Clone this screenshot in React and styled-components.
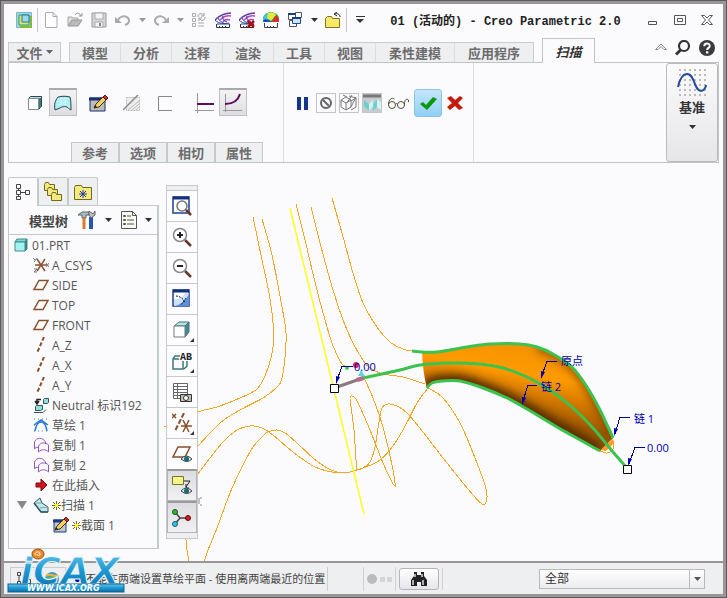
import React from 'react'
import styled, { createGlobalStyle } from 'styled-components'

// builds a smooth curve through a list of points
function curve(points) {
  let d = `M${points[0][0]} ${points[0][1]}`
  for (let i = 0; i < points.length - 1; i++) {
    const p0 = points[i - 1] || points[i]
    const p1 = points[i]
    const p2 = points[i + 1]
    const p3 = points[i + 2] || p2
    d += ` C${p1[0] + (p2[0] - p0[0]) / 6} ${p1[1] + (p2[1] - p0[1]) / 6} ${p2[0] - (p3[0] - p1[0]) / 6} ${p2[1] - (p3[1] - p1[1]) / 6} ${p2[0]} ${p2[1]}`
  }
  return d
}

const wires = [
  [[253, 217], [262, 260], [269, 293], [273, 323], [273, 347], [268, 368], [258, 388], [240, 398], [217, 407], [198, 412], [164, 427]],
  [[262, 219], [272, 255], [282, 307], [286, 333], [285, 357], [282, 378], [277, 387], [263, 398], [240, 410], [220, 423], [198, 446]],
  [[198, 474], [210, 458], [223, 442], [237, 430], [250, 426], [262, 428], [273, 435], [293, 452], [313, 466], [327, 471], [343, 473], [357, 470], [377, 462], [390, 450], [403, 430], [417, 403], [428, 388]],
  [[428, 388], [443, 398], [460, 423], [473, 453], [485, 485], [487, 497], [485, 504], [482, 504], [473, 495], [443, 458], [423, 432], [407, 413], [397, 406], [388, 404], [382, 408], [379, 422], [375, 447], [370, 462], [363, 468], [357, 470]],
  [[204, 562], [208, 550], [217, 528], [230, 493], [242, 467], [253, 447], [263, 436], [268, 432], [277, 430], [285, 433], [297, 443], [313, 458], [327, 468], [337, 472], [343, 473]],
  [[357, 470], [356, 460], [354, 430], [351, 407], [350, 398], [352, 396], [357, 401], [370, 430], [383, 463], [392, 482], [395, 486], [395, 483], [392, 465], [383, 427], [373, 398], [364, 378]],
  [[296, 204], [305, 240], [317, 290], [330, 337], [338, 357], [343, 365], [350, 367]],
  [[311, 207], [320, 243], [333, 290], [343, 320], [353, 343], [363, 360], [370, 368], [383, 374], [403, 377], [425, 384]],
  [[332, 198], [342, 233], [353, 273], [363, 303], [377, 327], [390, 342], [403, 349], [412, 351]],
  [[184, 530], [186, 540], [187, 550], [189, 562]],
  [[600, 451], [607, 453], [613, 449], [614, 441]],
]
const topEdge = [[422, 352], [437, 352], [467, 347], [490, 344], [520, 344], [537, 347], [553, 354], [572, 367], [587, 387], [600, 410], [613, 438]]
const bottomEdge = [[427, 388], [432, 383], [443, 381], [460, 381], [483, 388], [507, 398], [527, 409], [557, 427], [600, 451]]
const spine = [[363, 378], [400, 370], [420, 365], [450, 363], [480, 364], [503, 368], [527, 377], [550, 390], [573, 408], [593, 428], [613, 452], [627, 468]]
const surface =
  curve(topEdge) + ' L600 451 ' + curve([...bottomEdge].reverse()).replace('M', 'L') + ' Q423 374 422 352 Z'

const labels = [
  { text: '原点', x: 561, y: 365, line: '557,361 547,361 541,378', tip: [541, 379] },
  { text: '链 2', x: 541, y: 391, line: '537,385 528,385 522,404', tip: [522, 405] },
  { text: '链 1', x: 634, y: 423, line: '630,417 620,417 615,434', tip: [614, 436] },
  { text: '0.00', x: 647, y: 452, line: '645,447 635,447 629,464', tip: [628, 466] },
  { text: '0.00', x: 354, y: 371, line: '353,366 342,366 336,383', tip: [336, 384] },
]

const Icon = ({ w = 16, h = 16, children }) => (
  <Svg width={w} height={h} viewBox={`0 0 ${w} ${h}`} fill="none" aria-hidden="true">
    {children}
  </Svg>
)
const Caret = ({ color = '#333' }) => (
  <Icon w={7} h={4}><path d="M0 0h7L3.500 4z" fill={color} /></Icon>
)
const Undo = ({ flip }) => (
  <Icon>
    <g transform={flip ? 'translate(16 0) scale(-1 1)' : undefined}>
      <path d="M3 8c2-4 7-5 10-2 2.500 3 .5 6-3 7" stroke="#aaa" strokeWidth="2" />
      <path d="M0 5v6h7z" fill="#aaa" />
    </g>
  </Icon>
)
const Parallels = () => (
  <g>
    <path d="M16 1C10 1 5 3 0 8" stroke="#5a3a9c" strokeWidth="1.500" />
    <path d="M16 4C11 3 8 5 5 8M15 8c-4-1-6 0-7 2" stroke="#c03fc4" strokeWidth="1.500" />
    <path d="M0 8c4 4 9 4 14 3M3 6c1 3 4 4 7 6M8 4c-1 3 1 5 4 6" stroke="#26479f" />
    <path d="M2 12l13 0" stroke="#26479f" />
    <path d="M1.500 12v3.500h13V12M4.500 14v2M7.500 14v2M10.500 14v2" stroke="#333" />
  </g>
)
const Pencil = ({ x = 0, y = 0 }) => (
  <g transform={`translate(${x} ${y})`}>
    <path d="M1 13l2-4 8-8 3 3-8 8z" fill="#f5cf6b" stroke="#40300a" />
    <path d="M10 2l2-2 3 3-2 2z" fill="#c33329" stroke="#6d120d" />
    <path d="M1 13l1-3 2 2z" fill="#222" />
  </g>
)
const Eye = () => (
  <g>
    <path d="M9 15q5-6 11 0q-5 5-11 0z" fill="#d5e5e8" stroke="#444" />
    <circle cx="14.500" cy="15" r="2.500" fill="#176b77" />
  </g>
)
const Glass = ({ sign }) => (
  <g>
    <path d="M13 13l6 6" stroke="#6b342b" strokeWidth="2.500" />
    <circle cx="8" cy="8" r="6.500" fill="#fff" stroke="#888" strokeWidth="1.500" />
    {sign && <path d={sign} stroke="#222" strokeWidth="2" />}
  </g>
)
const Window = ({ size = 18 }) => (
  <g>
    <path d={`M1 1h${size - 2}v${size - 2}h-${size - 2}z`} fill="#fff" stroke="#1f3f92" strokeWidth="1.500" />
    <path d={`M1 2h${size - 2}`} stroke="#12307f" strokeWidth="3" />
  </g>
)
const Folder = ({ x = 0, y = 0 }) => (
  <path transform={`translate(${x} ${y})`} d="M.5 8.500v-6l1-2h3l1 2h5v6z" fill="#f3e87c" stroke="#73691e" />
)

const quickTools = [
  { name: '新建', icon: <Icon><path d="M3 .5h7l4 4v11H2.500V.5z M10 .5v4h4" stroke="#aaa" fill="#fff" /></Icon> },
  { name: '打开', icon: <Icon><path d="M1 14V5h4l1 1h5v2" fill="#ddd" stroke="#aaa" /><path d="M1 14l4-6h10l-4 6z" fill="#bbb" stroke="#999" /><path d="M8 3c2-3 5-2 6 1m1-3v3h-3" stroke="#999" /></Icon> },
  { name: '保存', icon: <Icon><path d="M1 1h14v14H1z" fill="#d5d5d8" stroke="#999" /><path d="M4 1h8v6H4zM4 10h8v5H4z" fill="#f5f5f6" stroke="#aaa" /><path d="M9 11v3" stroke="#888" strokeWidth="2" /></Icon> },
  { name: '撤销', icon: <Undo />, caret: '#999' },
  { name: '重做', icon: <Undo flip />, caret: '#999' },
  { name: '重新生成', icon: <Icon><path d="M1.500 1.500h3v3h-3zM1.500 6.500h3v3h-3zM1.500 11.500h3v3h-3zM7 11h6M7 14h6" stroke="#aaa" /><path d="M7 5c0-4 4-4 5-2m1-2v3h-3M14 5c0 4-4 4-5 2M8 9V6h3" stroke="#999" /></Icon> },
  { name: '曲率', icon: <Icon><Parallels /></Icon> },
  { name: '删除曲率', icon: <Icon><Parallels /><path d="M9 9l6 6m0-6l-6 6" stroke="#a80f17" strokeWidth="2.500" /></Icon> },
  { name: '着色分析', icon: <Icon><path d="M0 10V7c0-9 16-9 16 0v3z" fill="#2aa24a" /><path d="M0 8c0-4 3-7 6-7v6z" fill="#33c9e4" /><path d="M5 1c3-1 7-1 8 2l-5 6-4-3z" fill="#e6e83c" /><path d="M9 10l3-6c4 0 4 3 4 6z" fill="#da2f2f" /><path d="M0 10l2-3 7 3z" fill="#283fd3" /><path d="M1.500 11v4.500h13V11M4.500 14v2M7.500 14v2M10.500 14v2" stroke="#444" /></Icon> },
  { name: '窗口', icon: <Icon><path d="M1.500 1.500h7v6h-7zM8.500 .5h6v5h-6zM2.500 8.500h7v6h-7z" fill="#fff" stroke="#555" /><path d="M5.500 5.500h8v6h-8z" fill="#cde4ff" stroke="#1f4aa0" /><path d="M5 6h9M1 2h8" stroke="#173d8e" strokeWidth="2" /></Icon>, caret: '#333' },
  { name: '关闭', icon: <Icon><path d="M.5 15.500v-9l2-2h4l1 2h7v9z" fill="#f6e869" stroke="#81741e" /><path d="M15 5c0-3-3-4-5-3m2-2l-3 2 3 2" stroke="#222" /></Icon> },
]

const tabs = ['模型', '分析', '注释', '渲染', '工具', '视图', '柔性建模', '应用程序']

const shapeTools = [
  [
    { name: '实体', icon: <Icon><path d="M1.500 3.500l2-2h11v10l-3 3" fill="#a9e4e4" stroke="#345" /><path d="M13 3v10" stroke="#37787b" strokeWidth="2" /><path d="M1.500 3.500h10v11h-10z" fill="#fff" stroke="#888" /></Icon> },
    { name: '曲面', on: true, icon: <Icon w={18}><path d="M1 15c-1-6 0-9 3-13 4-1 8-1 12 0 1 4 1 8 1 13-2-1-3-2-4-3-3-1-6 0-7 1z" fill="#a8eeee" stroke="#345" /><path d="M4 4c5-1 8-1 11 1M3 7c5-2 8-1 12 1M3 10c4-2 8-2 12 1M7 3v8m4-8v8" stroke="#e9ffff" strokeDasharray="1 1" /></Icon> },
  ],
  [
    { name: '草绘', icon: <Icon w={20} h={18}><path d="M1 4h15v13H1z" fill="#bdbdb5" stroke="#14317d" /><path d="M0 5h17" stroke="#14317d" strokeWidth="3" /><Pencil x={4} y={1} /></Icon> },
    { name: '移除材料', icon: <Icon w={18}><path d="M3.500 2.500h13v13h-13z" fill="#eee" stroke="#bbb" strokeDasharray="2 1" /><path d="M5 15L16 6M9 15l7-6M13 15l3-3" stroke="#bbb" /><path d="M0 15L15 0" stroke="#888" strokeWidth="1.500" /></Icon> },
    { name: '薄板', icon: <Icon><path d="M15 1.500H1.500v14H15" stroke="#888" /></Icon> },
  ],
  [
    { name: '恒定截面', icon: <Icon w={20} h={20}><path d="M2.500 0v20M0 17.500h19" stroke="#999" /><path d="M2 11h17" stroke="#5b0d5e" strokeWidth="2" /></Icon> },
    { name: '可变截面', on: true, icon: <Icon w={20} h={20}><path d="M2.500 1v18M0 17.500h19" stroke="#999" /><path d="M2 11c8 0 13-3 15-10" stroke="#5b0d5e" strokeWidth="2" /></Icon> },
  ],
]

const treeRows = [
  { text: 'A_CSYS', icon: <Icon><path d="M2 8h12M4 2l8 12M12 2L4 14" stroke="#8b5332" strokeWidth="1.500" /><path d="M0 1l2 2m2-2L1 5m0 7h3l-3 3h3m9-9l3 4m0-4l-3 4" stroke="#777" /></Icon> },
  { text: 'SIDE', plane: true },
  { text: 'TOP', plane: true },
  { text: 'FRONT', plane: true },
  { text: 'A_Z', axis: true },
  { text: 'A_X', axis: true },
  { text: 'A_Y', axis: true },
  { text: 'Neutral 标识192', icon: <Icon><path d="M10.500 2.500l1-1h4v4l-1 1h-4zM2.500 9.500l1-1h6v4l-2 1h-5z" fill="#90dfdf" stroke="#355" /><path d="M1 15.500h9l3-3" stroke="#355" /><path d="M8 2.500H4V6M2 4l2 3 2-3" stroke="#222" strokeWidth="1.500" /></Icon> },
  { text: '草绘 1', icon: <Icon><path d="M1 2h15M1 14h15M1 8h3m8 0h4" stroke="#347ad3" strokeDasharray="1 3" /><path d="M2 14C4 2 12 2 14 14M1 8l7-5 7 5" stroke="#287bd0" strokeWidth="1.500" /></Icon> },
  { text: '复制 1', copy: true },
  { text: '复制 2', copy: true },
  { text: '在此插入', icon: <Icon><path d="M3 6h5V2l6 6-6 6v-4H3z" fill="#d4131b" stroke="#770b0e" /></Icon> },
  { text: '扫描 1', open: true, star: true, icon: <Icon><path d="M1 6l6-5 2 5 6 4v5H8z" fill="#bfe8e8" stroke="#356" /><path d="M1 6l8 0M7 11l8-1" stroke="#79a9ad" /><path d="M1 6l7 9h7" stroke="#356" strokeWidth="1.500" /></Icon> },
  { text: '截面 1', child: true, star: true, icon: <Icon><path d="M1 3h12v12H1z" fill="#c2c7ce" stroke="#163a83" /><path d="M0 4h14" stroke="#163a83" strokeWidth="3" /><Pencil x={1} y={0} /></Icon> },
]
const rowIcon = (row) => {
  if (row.plane) return <Icon><path d="M6 3.500h9l-5 9H1z" stroke="#8b4f2b" strokeWidth="1.500" /></Icon>
  if (row.axis) return <Icon><path d="M11 0L4 16" stroke="#8b4f2b" strokeWidth="2" strokeDasharray="4 2" /></Icon>
  if (row.copy) return <Icon><path d="M1.500 12V5c2-5 8-5 11 0v2M1.500 12c1-2 2-2 4-1" stroke="#9455c4" /><path d="M5.500 15V9c2-4 7-4 10-1v7c-3-3-7-3-10 0z" stroke="#9455c4" /></Icon>
  return row.icon
}

const viewTools = [
  { name: '重新调整', icon: <Icon w={20} h={20}><Window /><circle cx="10" cy="10" r="5" fill="#fff" stroke="#777" strokeWidth="1.500" /><path d="M14 14l5 5" stroke="#6b342b" strokeWidth="2.500" /></Icon> },
  { name: '放大', icon: <Icon w={20} h={20}><Glass sign="M5 8h6M8 5v6" /></Icon> },
  { name: '缩小', icon: <Icon w={20} h={20}><Glass sign="M5 8h6" /></Icon> },
  { name: '重画', icon: <Icon w={20} h={20}><Window /><path d="M17 4v13H2c7-2 12-6 15-13z" fill="#5f8fd8" /><path d="M2 17V10c5 1 9-2 11-6h4c-2 6-8 12-15 13z" fill="#cfe0f8" /><path d="M4 7c4 0 8 3 9 7M14 9l-5 7" stroke="#123" strokeDasharray="2 1" /></Icon> },
  { name: '显示样式', menu: true, icon: <Icon w={20} h={20}><path d="M2 6l5-4h10l-4 4z" fill="#a8ecec" stroke="#567" /><path d="M13 6l4-4v10l-4 5z" fill="#3b8f91" stroke="#567" /><path d="M2 6h11v11H2z" fill="#fff" stroke="#777" /></Icon> },
  { name: '命名视图', menu: true, icon: <Icon w={20} h={20}><path d="M8 5H3L1 8v10h10V10M1 8h6M12 18l3-3v-5" stroke="#3b7a7c" strokeWidth="1.500" /><text x="8" y="9" fontFamily="Liberation Mono" fontWeight="700" fontSize="10" fill="#222">AB</text></Icon> },
  { name: '视图管理器', icon: <Icon w={20} h={20}><path d="M1.500 1.500h14v15h-14zM1 4.500h15M1 7.500h15M1 10.500h15M1 13.500h9M5.500 1v15" stroke="#666" /><path d="M8.500 12.500h11v7h-11z" fill="#bdbdb4" stroke="#333" /><circle cx="14" cy="16" r="2.500" fill="#fff" stroke="#333" /></Icon> },
  { name: '基准显示', menu: true, icon: <Icon w={20} h={20}><path d="M0 1l4 4m0-4L0 5" stroke="#8b4f2b" strokeWidth="1.500" /><path d="M12 0L3 18" stroke="#8b4f2b" strokeWidth="2" strokeDasharray="5 2" /><path d="M9 13h11M11 7l6 12M17 7l-6 12" stroke="#8b4f2b" strokeWidth="1.500" /></Icon> },
  { name: '平面显示', icon: <Icon w={20} h={20}><path d="M6 3h12l-5 10H1z" stroke="#8b4f2b" strokeWidth="1.500" /><Eye /></Icon> },
  { name: '注释显示', on: true, icon: <Icon w={20} h={20}><path d="M.5 .5h11v8H.5z" fill="#f7f38f" stroke="#777722" /><path d="M12 5h6l-4 6m0-3v4h3" stroke="#222" /><Eye /></Icon> },
  { name: '旋转中心', on: true, icon: <Icon w={20} h={20}><path d="M3 4l5 6h8M8 10l-5 6" stroke="#444" strokeWidth="1.500" /><circle cx="3" cy="4" r="2.500" fill="#2dbb3a" stroke="#174f1a" /><circle cx="16" cy="10" r="2.500" fill="#d31c27" stroke="#63090e" /><circle cx="3" cy="16" r="2.500" fill="#33c9dc" stroke="#126070" /></Icon> },
]

function TitleBar() {
  return (
    <TitleRow>
      <ToolButton aria-label="Creo">
        <Icon><path d="M.5 .5h15v15H.5z" fill="#9bd5ea" stroke="#79b9ce" /><path d="M3 3h10v10H3z" fill="#d8e860" stroke="#3c9a58" /><path d="M6 3h7v7H6z" fill="#9ad9f0" stroke="#2b7b97" /><path d="M15 4v11H4" stroke="#7ebc3e" strokeWidth="2" /></Icon>
      </ToolButton>
      <Line />
      {quickTools.map((tool) => (
        <React.Fragment key={tool.name}>
          <ToolButton aria-label={tool.name}>{tool.icon}</ToolButton>
          {tool.caret && <CaretButton aria-label={tool.name + '菜单'}><Caret color={tool.caret} /></CaretButton>}
        </React.Fragment>
      ))}
      <Line />
      <ToolButton aria-label="自定义"><Icon w={9} h={8}><path d="M0 .5h9" stroke="#333" /><path d="M0 3h8L4 7z" fill="#333" /></Icon></ToolButton>
      <Title>01 (活动的) - Creo Parametric 2.0</Title>
      <FrameButton aria-label="最小化"><Icon w={12} h={12}><path d="M1.500 7.500h8v3h-8z" stroke="#555" /></Icon></FrameButton>
      <FrameButton aria-label="最大化"><Icon w={12} h={12}><path d="M.5 1.500h11v9H.5zM3.500 4.500h5v3h-5z" stroke="#555" /></Icon></FrameButton>
      <FrameButton aria-label="关闭窗口"><Icon w={12} h={12}><path d="M.5 1.500h3L6 4l2.500-2.500h3L7.500 6l4 4.500h-3L6 8l-2.500 2.500h-3L4.500 6z" stroke="#555" /></Icon></FrameButton>
    </TitleRow>
  )
}

function Ribbon() {
  return (
    <>
      <TabRow>
        <FileTab>文件 <Caret color="#666" /></FileTab>
        <TabGroup>
          {tabs.map((tab) => <Tab key={tab} $wide={tab.length > 2}>{tab}</Tab>)}
        </TabGroup>
        <ActiveTab>扫描</ActiveTab>
        <TabTools>
          <PlainButton aria-label="折叠功能区"><Icon w={12} h={10}><path d="M.5 6.500L6 1l5.500 5.500H9l-3-3-3 3z" stroke="#888" /></Icon></PlainButton>
          <PlainButton aria-label="搜索"><Icon><circle cx="9" cy="6" r="5" stroke="#333" strokeWidth="2.200" /><path d="M5.500 10L1 14.500" stroke="#333" strokeWidth="3" /></Icon></PlainButton>
          <PlainButton aria-label="帮助"><Icon><circle cx="8" cy="8" r="8" fill="#3a3a3a" /><path d="M5.300 6.200C5.300 2.600 10.700 2.600 10.700 6 10.700 8 8.200 7.800 8.200 10" stroke="#fff" strokeWidth="2" /><path d="M7 11.300h2.300v2.200H7z" fill="#fff" /></Icon></PlainButton>
        </TabTools>
      </TabRow>
      <RibbonBox>
        <ShapeGroup>
          <ShapeRow>
            {shapeTools.map((set, i) => (
              <ShapeSet key={i}>
                {set.map((tool) => <ShapeButton key={tool.name} $on={tool.on} aria-label={tool.name}>{tool.icon}</ShapeButton>)}
              </ShapeSet>
            ))}
          </ShapeRow>
          <SubTabs>
            {['参考', '选项', '相切', '属性'].map((name) => <SubTab key={name}>{name}</SubTab>)}
          </SubTabs>
        </ShapeGroup>
        <ControlGroup>
          <SmallButton aria-label="暂停"><Icon><path d="M2 2h4v13H2zM9 2h4v13H9z" fill="#12378c" /></Icon></SmallButton>
          <SmallButton $boxed aria-label="无预览"><Icon><circle cx="8" cy="8" r="5" stroke="#666" strokeWidth="2" /><path d="M5 5l6 6" stroke="#666" strokeWidth="2" /></Icon></SmallButton>
          <SmallButton $boxed aria-label="分离"><Icon w={18} h={18}><path d="M1 6l5-3 5 3v7l-5 3-5-3zM1 6l5 3 5-3M6 9v7M9 2l7 2v9l-5 3M16 4l-5 3M3 1l4 2M11 13l5-10M7 9l5-8" stroke="#777" /></Icon></SmallButton>
          <SmallButton $boxed $dark aria-label="连接"><Icon w={18} h={18}><path d="M0 2h18" stroke="#777" strokeWidth="3" /><path d="M1 6l5 4v7l-5-5zM10 10l4-5v8l-4 4z" fill="#6fcfcb" /><path d="M6 10l4-4v6l-4 5zM14 5l4 3v8l-4-3z" fill="#d2f6f3" /></Icon></SmallButton>
          <GlassesButton aria-label="预览"><Icon w={22} h={12}><circle cx="5" cy="8" r="3.500" stroke="#554b36" /><circle cx="14" cy="8" r="3.500" stroke="#554b36" /><path d="M8.500 7q1-1 2 0M1.500 7c0-4 3-7 6-5M17.500 7c0-4 2-6 4-4v2" stroke="#554b36" /></Icon></GlassesButton>
          <OkButton aria-label="确定"><Icon w={18}><path d="M1 9l3-2 3 3 7-8 4 2L8 15z" fill="#0a980d" /></Icon></OkButton>
          <SmallButton aria-label="取消"><Icon><path d="M0 3l4-2 4 4 5-4 3 2-5 5 5 5-4 2-4-4-5 4-3-3 5-4z" fill="#c51b0b" /></Icon></SmallButton>
        </ControlGroup>
        <DatumButton>
          <Icon w={30} h={28}>
            <path d="M2 1h28M2 6h28M2 11h28M2 16h28M2 21h28M2 26h28" stroke="#bbb" strokeWidth="2" strokeDasharray="2 3" />
            <path d="M1 18C3 9 6 5 10 5c8 0 7 17 14 17 3 0 5-4 5-6" stroke="#214c9c" strokeWidth="2" />
          </Icon>
          基准
          <Caret />
        </DatumButton>
      </RibbonBox>
    </>
  )
}

function ModelTree() {
  return (
    <Panel>
      <PanelTabs>
        <PanelTab $active aria-label="模型树"><Icon><path d="M1.500 .5h4v4h-4zM1.500 6.500h4v4h-4zM1.500 12.500h4v3h-4zM10.500 6.500h4v4h-4zM3.500 4.500v2M3.500 10.500v2M5.500 8.500h5" stroke="#444" /></Icon></PanelTab>
        <PanelTab aria-label="文件夹浏览器"><Icon w={20} h={20}><Folder x={1} y={0} /><Folder x={4} y={5} /><Folder x={8} y={10} /></Icon></PanelTab>
        <PanelTab aria-label="收藏夹"><Icon w={18} h={16}><path d="M.5 15.500V3.500l1-2h6l1 2h9v12z" fill="#f5ea80" stroke="#73691e" /><path d="M9 6v8M5 10h8M6 7l6 6M12 7l-6 6" stroke="#173ba0" /></Icon></PanelTab>
      </PanelTabs>
      <PanelBody>
        <PanelBar>
          模型树
          <PlainButton aria-label="设置">
            <Icon w={20} h={20}><path d="M1 5l4-3h7v3H9v3H5V5z" fill="#aebac2" stroke="#566" /><path d="M7 8v11" stroke="#dc7b22" strokeWidth="3" /><path d="M14 7v12" stroke="#2357b3" strokeWidth="4" /><path d="M12 1v4l2 3 4-3V1l-2 3z" fill="#bac1c6" stroke="#666" /></Icon>
            <Caret />
          </PlainButton>
          <PlainButton aria-label="显示">
            <Icon w={16} h={20}><path d="M.5 1.500h11l4 4v13H.5z" fill="#fafaf0" stroke="#555" /><path d="M11.500 1.500v4h4M6 6h4M6 10h7M6 14h7" stroke="#555" /><path d="M2.500 5.500h2v1h-2zM2.500 9.500h2v1h-2zM2.500 13.500h2v1h-2z" stroke="#555" /></Icon>
            <Caret />
          </PlainButton>
        </PanelBar>
        <Tree>
          <TreeRow $root><Icon><path d="M2 5l2-3h10l-2 3z" fill="#7cd9da" stroke="#488" /><path d="M12 5l2-3v10l-2 2z" fill="#26888a" stroke="#488" /><path d="M2 5h10v9H2z" fill="#a3f3f5" stroke="#488" /></Icon>01.PRT</TreeRow>
          {treeRows.map((row) => (
            <TreeRow key={row.text} $child={row.child}>
              {!row.child && <Twisty>{row.open && <Icon w={10} h={8}><path d="M0 0h10L5 8z" fill="#888" /></Icon>}</Twisty>}
              {rowIcon(row)}
              <RowText>
                {row.star && <Icon w={9} h={9}><path d="M4.500 0v9M0 4.500h9M1 1l7 7M8 1L1 8" stroke="#77701a" /><path d="M3 3h3v3H3z" fill="#ff0" /></Icon>}
                {row.text}
              </RowText>
            </TreeRow>
          ))}
        </Tree>
      </PanelBody>
    </Panel>
  )
}

function Viewport() {
  return (
    <Stage>
      <Drawing viewBox="159 163 564 398" preserveAspectRatio="xMinYMin meet" fill="none">
        <defs>
          <linearGradient id="skin" gradientUnits="userSpaceOnUse" x1="502" y1="345" x2="490" y2="412">
            <stop offset="0" stopColor="#f59300" />
            <stop offset=".35" stopColor="#ff9b00" />
            <stop offset=".6" stopColor="#dc7f00" />
            <stop offset="1" stopColor="#a05800" />
          </linearGradient>
          <clipPath id="skinClip"><path d={surface} /></clipPath>
          <filter id="shade" x="-20%" y="-50%" width="140%" height="200%"><feGaussianBlur stdDeviation="5" /></filter>
        </defs>
        <g stroke="#f0a726" shapeRendering="crispEdges">
          {wires.map((points, i) => <path key={i} d={curve(points)} />)}
        </g>
        <path d="M290 208L364 514" stroke="#ffff1a" strokeWidth="1.500" />
        <path d={surface} fill="url(#skin)" />
        <g clipPath="url(#skinClip)">
          <path d={curve(bottomEdge)} stroke="#4f2b00" strokeWidth="13" filter="url(#shade)" />
          <path d={curve(topEdge.slice(5))} stroke="#7b4500" strokeWidth="6" filter="url(#shade)" />
        </g>
        <path d="M601 450l12-11 1 4-8 8z" fill="#ff9a1a" />
        <g stroke="#3cc24e" strokeWidth="3">
          <path d={curve([[412, 351], ...topEdge])} />
          <path d={curve(bottomEdge)} />
          <path d={curve(spine)} />
        </g>
        <path d="M337 387L363 378" stroke="#8b7a7c" strokeWidth="3" />
        <path d="M356 378l7-2 1 4-6 2z" fill="#b86a88" />
        <path d="M358 376l3-6 4 6z" fill="#5ad6e4" />
        <circle cx="347" cy="368" r="2" fill="#35d05a" />
        <circle cx="356" cy="365" r="3" fill="#d8284e" />
        {labels.map((label) => (
          <g key={label.x}>
            <polyline points={label.line} stroke="#00008f" shapeRendering="crispEdges" />
            <path d={`M${label.tip[0]} ${label.tip[1]}l0-8 4 1z`} fill="#0000b0" />
            <LabelText x={label.x} y={label.y}>{label.text}</LabelText>
          </g>
        ))}
        <path d="M330.500 384.500h8v8h-8zM623.500 465.500h8v8h-8z" fill="#fff" stroke="#000" />
        <path d="M199 498v6m3-6h-2m0 7h2" stroke="#888" />
      </Drawing>
      <ViewBar>
        {viewTools.map((tool) => (
          <ViewButton key={tool.name} $on={tool.on} aria-label={tool.name}>
            {tool.icon}
            {tool.menu && <Corner><Icon w={4} h={4}><path d="M4 0v4H0z" fill="#333" /></Icon></Corner>}
          </ViewButton>
        ))}
      </ViewBar>
    </Stage>
  )
}

function StatusBar() {
  return (
    <Status>
      <StatusButton aria-label="模型树开关"><Icon><path d="M1.500 1.500h3v3h-3zM1.500 10.500h3v3h-3zM10.500 8.500h4v4h-4zM3 5v5M5 11h5" stroke="#444" /></Icon></StatusButton>
      <StatusButton aria-label="浏览器开关"><Icon><circle cx="8" cy="8" r="7" fill="#3f9cd8" /><path d="M1 9c3-5 6-1 12-5 1 5-2 9-7 10z" fill="#6dbb3d" /><path d="M2 5c4-4 8 2 12-1" stroke="#f2b233" strokeWidth="2" /></Icon></StatusButton>
      <Message><Dot />不能在两端设置草绘平面 - 使用离两端最近的位置</Message>
      <StatusGap />
      <Lights><Icon w={26} h={12}><circle cx="5" cy="6" r="5" fill="#bbb" /><path d="M13 4h5v5h-5zM20 4h5v5h-5z" fill="#d5d5d8" /></Icon></Lights>
      <FindCell>
        <FindButton aria-label="查找"><Icon w={18}><path d="M4 1h3v3h4V1h3v4l3 4v6h-6v-4H7v4H1V9l3-4z" fill="#222" /><path d="M3 9v5M13 9v5M5 3v3M12 3v3" stroke="#ddd" strokeWidth="1.500" /></Icon></FindButton>
      </FindCell>
      <FilterBox>
        <FilterSelect aria-label="选择过滤器" defaultValue="all">
          <option value="all">全部</option>
        </FilterSelect>
        <FilterArrow><Caret color="#555" /></FilterArrow>
      </FilterBox>
      <Watermark width="120" height="46" viewBox="0 0 120 46">
        <defs>
          <linearGradient id="blue" x1="0" y1="0" x2="0" y2="1">
            <stop offset="0" stopColor="#6cc8ee" />
            <stop offset=".5" stopColor="#1d96d2" />
            <stop offset="1" stopColor="#0a6ea8" />
          </linearGradient>
        </defs>
        <BrandText x="13" y="36">iCAX</BrandText>
        <rect x="1" y="36" width="116" height="8" fill="url(#blue)" stroke="#0d628f" />
        <ellipse cx="31" cy="6" rx="6" ry="5" fill="#f08a24" stroke="#9b4c10" />
        <path d="M28 7c0-4 5-4 5-1 0 2-3 2-3 0" stroke="#fff" fill="none" />
        <BrandUrl x="20" y="43">WWW.ICAX.ORG</BrandUrl>
      </Watermark>
    </Status>
  )
}

function App() {
  return (
    <Shell>
      <GlobalStyle />
      <Frame>
        <TitleBar />
        <Ribbon />
        <Workspace>
          <ModelTree />
          <Viewport />
        </Workspace>
        <StatusBar />
      </Frame>
    </Shell>
  )
}

export default App

const GlobalStyle = createGlobalStyle`
  *{
    box-sizing:border-box;
  }
  body{
    margin:0;
    font-family:"Open Sans", "Noto Sans CJK SC", sans-serif;
    font-size:12px;
    color:#444;
  }
  button{
    font:inherit;
    color:inherit;
    padding:0;
    border:0;
    background:none;
  }
`

const Shell = styled.div`
  height:100vh;
  padding:3px;
  border:1px solid #5c5a5a;
  background-color:#989696;
`

const Frame = styled.div`
  height:100%;
  display:flex;
  flex-direction:column;
  background-color:#fbfbfe;
  overflow:hidden;
`

const Svg = styled.svg`
  display:block;
  flex:none;
`

const PlainButton = styled.button`
  display:flex;
  align-items:center;
  justify-content:center;
  gap:8px;
`

const TitleRow = styled.header`
  height:32px;
  flex:none;
  display:flex;
  align-items:center;
  padding:0 3px 0 8px;
`

const ToolButton = styled(PlainButton)`
  width:24px;
  height:24px;
`

const CaretButton = styled(PlainButton)`
  width:14px;
  height:24px;
`

const Line = styled.span`
  width:1px;
  height:24px;
  margin:0 1px;
  background-color:#c8c8d0;
`

const Title = styled.h1`
  flex:1;
  margin:0;
  text-align:center;
  white-space:nowrap;
  font-family:"Liberation Mono", "Noto Sans CJK SC", monospace;
  font-size:12px;
  font-weight:700;
  color:#222;
`

const FrameButton = styled(PlainButton)`
  width:27px;
  height:24px;
`

const TabRow = styled.nav`
  height:26px;
  flex:none;
  display:flex;
  align-items:flex-end;
  padding:0 4px;
  font-size:13px;
  font-weight:700;
  color:#6c6c6c;
`

const FileTab = styled(PlainButton)`
  width:53px;
  height:20px;
  gap:3px;
  border:1px solid #c9cccf;
  background-color:#eeeff1;
  margin-right:8px;
`

const TabGroup = styled.div`
  display:flex;
  height:20px;
  border:1px solid #c9cccf;
  border-bottom:0;
  background-color:#eeeff1;
`

const Tab = styled(PlainButton)`
  padding:0 ${(props) => (props.$wide ? 13 : 12)}px;
  white-space:nowrap;
  border-right:1px solid #dcdee1;
  &:last-child{
    border-right:0;
  }
`

const ActiveTab = styled(PlainButton)`
  width:53px;
  height:25px;
  margin:0 0 -1px 8px;
  position:relative;
  border:1px solid #c0c3c6;
  border-bottom:0;
  background-color:#fbfbfe;
  font-style:italic;
  color:#333;
`

const TabTools = styled.div`
  margin-left:auto;
  padding:0 4px 6px 0;
  display:flex;
  align-items:center;
  gap:8px;
`

const RibbonBox = styled.section`
  height:101px;
  flex:none;
  display:flex;
  margin:0 4px;
  border:1px solid #c0c3c6;
`

const ShapeGroup = styled.div`
  width:275px;
  flex:none;
  display:flex;
  flex-direction:column;
  justify-content:space-between;
  border-right:1px solid #dcdee1;
`

const ShapeRow = styled.div`
  display:flex;
  gap:12px;
  padding:25px 0 0 12px;
`

const ShapeSet = styled.div`
  display:flex;
  gap:5px;
  &:first-child{
    gap:0;
    margin-right:-4px;
  }
  &:last-child{
    gap:0;
  }
`

const ShapeButton = styled(PlainButton)`
  width:28px;
  height:28px;
  && {
    border:1px solid ${(props) => (props.$on ? '#c0c0c4' : 'transparent')};
    border-top:2px solid ${(props) => (props.$on ? '#aaa' : 'transparent')};
    background:${(props) => (props.$on ? 'linear-gradient(#f4f4f6, #dedee2)' : 'none')};
  }
`

const SubTabs = styled.div`
  display:flex;
  padding-left:62px;
`

const SubTab = styled.button`
  width:48px;
  height:20px;
  && {
    border:1px solid #c6c9cc;
    border-bottom:0;
    background-color:#eeeff1;
  }
  font-size:13px;
  font-weight:700;
  line-height:18px;
  color:#6c6c6c;
`

const ControlGroup = styled.div`
  width:190px;
  flex:none;
  display:flex;
  align-items:center;
  gap:3px;
  padding:0 0 20px 9px;
  border-right:1px solid #dcdee1;
`

const SmallButton = styled(PlainButton)`
  width:20px;
  height:20px;
  border:1px solid ${(props) => (props.$boxed ? '#c4c4c8' : 'transparent')};
  background-color:${(props) => (props.$dark ? '#c9cccf' : 'transparent')};
`

const GlassesButton = styled(PlainButton)`
  width:26px;
  height:20px;
`

const OkButton = styled(PlainButton)`
  width:28px;
  height:28px;
  border:1px solid #8cc4e6;
  border-radius:3px;
  background:linear-gradient(#c5e6fa, #90cff6);
`

const DatumButton = styled(PlainButton)`
  width:52px;
  margin-left:auto;
  flex-direction:column;
  justify-content:flex-start;
  gap:0;
  padding-top:5px;
  border:1px solid #bbb;
  border-radius:3px;
  background:linear-gradient(#fbfbfc, #e6e6e9);
  font-size:13px;
  font-weight:700;
  line-height:20px;
  color:#333;
  ${Svg}:last-child{
    margin-top:8px;
  }
`

const Workspace = styled.main`
  flex:1;
  min-height:0;
  display:flex;
`

const Panel = styled.aside`
  width:151px;
  flex:none;
  display:flex;
  flex-direction:column;
  margin:14px 0 12px 4px;
`

const PanelTabs = styled.div`
  display:flex;
  height:29px;
`

const PanelTab = styled(PlainButton)`
  width:30px;
  height:${(props) => (props.$active ? 29 : 28)}px;
  position:relative;
  border:1px solid #c6c9cc;
  border-bottom:0;
  border-radius:2px 2px 0 0;
  background-color:${(props) => (props.$active ? '#fbfbfe' : '#eeeff1')};
`

const PanelBody = styled.div`
  flex:1;
  min-height:0;
  margin-top:-1px;
  border:1px solid #c6c9cc;
  border-right:2px solid #c6c9cc;
`

const PanelBar = styled.div`
  height:29px;
  display:flex;
  align-items:center;
  gap:9px;
  padding-left:20px;
  border-bottom:1px solid #c6c9cc;
  font-size:13px;
  font-weight:700;
`

const Tree = styled.ul`
  list-style:none;
  margin:0;
  padding:0;
  color:#555;
`

const TreeRow = styled.li`
  height:20px;
  display:flex;
  align-items:center;
  gap:3px;
  padding-left:${(props) => (props.$root ? 4 : props.$child ? 44 : 8)}px;
  white-space:nowrap;
`

const Twisty = styled.span`
  width:13px;
`

const RowText = styled.span`
  display:flex;
  align-items:center;
`

const Stage = styled.section`
  flex:1;
  min-width:0;
  position:relative;
  padding:22px 0 0 7px;
`

const Drawing = styled.svg`
  position:absolute;
  inset:0;
  width:100%;
  height:100%;
`

const LabelText = styled.text`
  font-family:"Open Sans", "Noto Sans CJK SC", sans-serif;
  font-size:11px;
  fill:#0000a8;
`

const ViewBar = styled.div`
  width:32px;
  position:relative;
  padding:4px 0 5px;
  border:1px solid #c6c9cc;
  background-color:#eeeff1;
`

const ViewButton = styled(PlainButton)`
  width:30px;
  height:${(props) => (props.$on ? 32 : 31)}px;
  position:relative;
  && {
    border-top:1px solid #c6c9cc;
    background-color:#fdfdff;
  }
  ${(props) => props.$on && `
    && {
      border:1px solid #b5b5b9;
      border-top:2px solid #999;
      background:linear-gradient(#dcdce0, #f1f1f4);
    }
  `}
`

const Corner = styled.span`
  position:absolute;
  right:3px;
  bottom:3px;
`

const Status = styled.footer`
  height:33px;
  flex:none;
  position:relative;
  display:flex;
  align-items:center;
  padding:0 18px 0 6px;
  border-top:2px solid #989696;
  background-color:#eeeff1;
`

const StatusButton = styled(PlainButton)`
  width:28px;
  height:24px;
  border:1px solid #ccc;
`

const Message = styled.div`
  flex:0 1 262px;
  min-width:0;
  height:24px;
  line-height:24px;
  padding-left:9px;
  overflow:hidden;
  white-space:nowrap;
  font-size:11px;
  border-right:1px solid #d0d0d4;
`

const Dot = styled.span`
  display:inline-block;
  width:5px;
  height:5px;
  margin-right:5px;
  border-radius:50%;
  background-color:#0000b5;
  vertical-align:middle;
`

const StatusGap = styled.span`
  width:36px;
  height:24px;
  border-right:1px solid #d0d0d4;
`

const Lights = styled.span`
  width:32px;
  height:24px;
  display:flex;
  align-items:center;
  justify-content:center;
  border-right:1px solid #d0d0d4;
`

const FindCell = styled.span`
  padding:0 3px;
  border-right:1px solid #d0d0d4;
`

const FindButton = styled(PlainButton)`
  width:40px;
  height:22px;
  && {
    border:1px solid #b5b5b9;
  }
  border-radius:3px;
  background:linear-gradient(#fff, #e6e6ea);
`

const FilterBox = styled.div`
  width:166px;
  height:20px;
  margin-left:auto;
  display:flex;
  border:1px solid #b8bbbe;
  background:linear-gradient(#fff, #ececef);
`

const FilterSelect = styled.select`
  flex:1;
  appearance:none;
  border:0;
  padding:0 5px;
  background:none;
  font:inherit;
  line-height:18px;
  color:#333;
`

const FilterArrow = styled.span`
  width:15px;
  display:flex;
  align-items:center;
  justify-content:center;
  border-left:1px solid #b8bbbe;
`

const Watermark = styled.svg`
  position:absolute;
  left:3px;
  bottom:0;
`

const BrandText = styled.text`
  font-family:"DejaVu Sans", sans-serif;
  font-size:38px;
  font-style:italic;
  font-weight:700;
  fill:url(#blue);
  stroke:#e9f7fd;
  stroke-width:1px;
`

const BrandUrl = styled.text`
  font-family:"DejaVu Sans", sans-serif;
  font-size:8px;
  font-style:italic;
  font-weight:700;
  fill:#fff;
`
